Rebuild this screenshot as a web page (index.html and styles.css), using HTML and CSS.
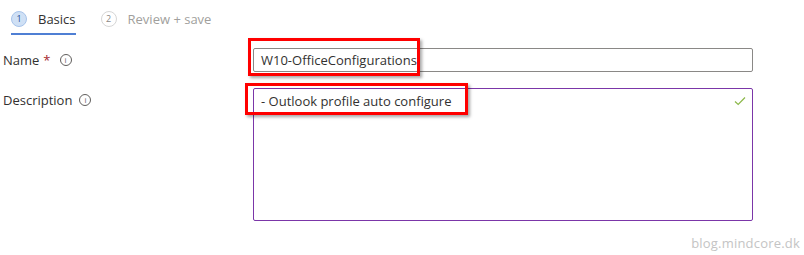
FILE: index.html
```html
<!DOCTYPE html>
<html lang="en">
<head>
    <meta charset="UTF-8">
    <title>Create profile - Basics</title>
    <link rel="stylesheet" href="styles.css">
</head>
<body>
    <div class="page">
        <!-- Wizard tabs -->
        <div class="tabs">
            <div class="tab active">
                <span class="step">1</span>
                <span class="tab-label">Basics</span>
            </div>
            <div class="tab">
                <span class="step">2</span>
                <span class="tab-label">Review + save</span>
            </div>
        </div>

        <!-- Form -->
        <div class="form">
            <div class="row">
                <label class="label">Name <span class="req">*</span> <span class="info">i</span></label>
                <div class="field">
                    <div class="input">W10-OfficeConfigurations</div>
                    <div class="mark mark-name"></div>
                </div>
            </div>
            <div class="row">
                <label class="label">Description <span class="info">i</span></label>
                <div class="field">
                    <div class="textarea">
                        - Outlook profile auto configure
                        <svg class="check" width="12" height="10" viewBox="0 0 12 10">
                            <path d="M1 5.5 L4.2 8.5 L11 1.5" fill="none" stroke="#8cb84a" stroke-width="1.2"/>
                        </svg>
                    </div>
                    <div class="mark mark-desc"></div>
                </div>
            </div>
        </div>

        <div class="watermark">blog.mindcore.dk</div>
    </div>
</body>
</html>
```

FILE: styles.css
```css
/* General */
body {
    margin: 0;
    background: #fff;
    font-family: "Open Sans", "Noto Sans", sans-serif;
    font-size: 13px;
    color: #323130;
}

.page {
    position: relative;
    width: 804px;
    height: 255px;
}

/* Tabs */
.tabs {
    display: flex;
    gap: 25px;
    padding: 11px 0 0 11px;
}

.tab {
    display: flex;
    align-items: center;
    gap: 11px;
    height: 16px;
    padding-bottom: 6px;
    border-bottom: 2px solid transparent;
}

.tab.active {
    border-bottom-color: #4f7fd4;
}

.step {
    width: 14px;
    height: 14px;
    border-radius: 50%;
    border: 1px solid #d6d6d6;
    font-size: 9px;
    line-height: 14px;
    text-align: center;
    color: #8a8886;
}

.tab.active .step {
    background: #cfe0f5;
    border-color: #a7c3ea;
    color: #1f4e95;
}

.tab-label {
    font-size: 13px;
    color: #a19f9d;
}

.tab.active .tab-label {
    color: #323130;
}

/* Form rows */
.form {
    display: flex;
    flex-direction: column;
    gap: 16px;
    padding: 13px 0 0 3px;
}

.row {
    display: grid;
    grid-template-columns: 250px 500px;
    align-items: start;
}

.label {
    display: flex;
    align-items: center;
    gap: 4px;
    height: 24px;
}

.req {
    color: #a4262c;
    margin-right: 2px;
}

.info {
    width: 10px;
    height: 10px;
    border: 1px solid #605e5c;
    border-radius: 50%;
    font-size: 8px;
    line-height: 10px;
    text-align: center;
    color: #605e5c;
    margin-left: 3px;
}

.field {
    position: relative;
}

.input {
    height: 22px;
    line-height: 22px;
    border: 1px solid #8a8886;
    border-radius: 2px;
    padding: 0 7px;
}

.textarea {
    position: relative;
    height: 123px;
    border: 1px solid #7b36a8;
    border-radius: 2px;
    padding: 4px 7px;
    line-height: 16px;
}

.check {
    position: absolute;
    top: 7px;
    right: 6px;
}

/* Red annotation boxes */
.mark {
    position: absolute;
    border: 3px solid #ff0000;
    box-shadow: 2px 2px 3px rgba(0, 0, 0, 0.35);
}

.mark-name {
    left: -5px;
    top: -10px;
    width: 166px;
    height: 32px;
}

.mark-desc {
    left: -8px;
    top: -5px;
    width: 217px;
    height: 26px;
}

.watermark {
    position: absolute;
    right: 4px;
    bottom: 3px;
    font-size: 13px;
    letter-spacing: 0.2px;
    color: #c4c4c4;
}
```
